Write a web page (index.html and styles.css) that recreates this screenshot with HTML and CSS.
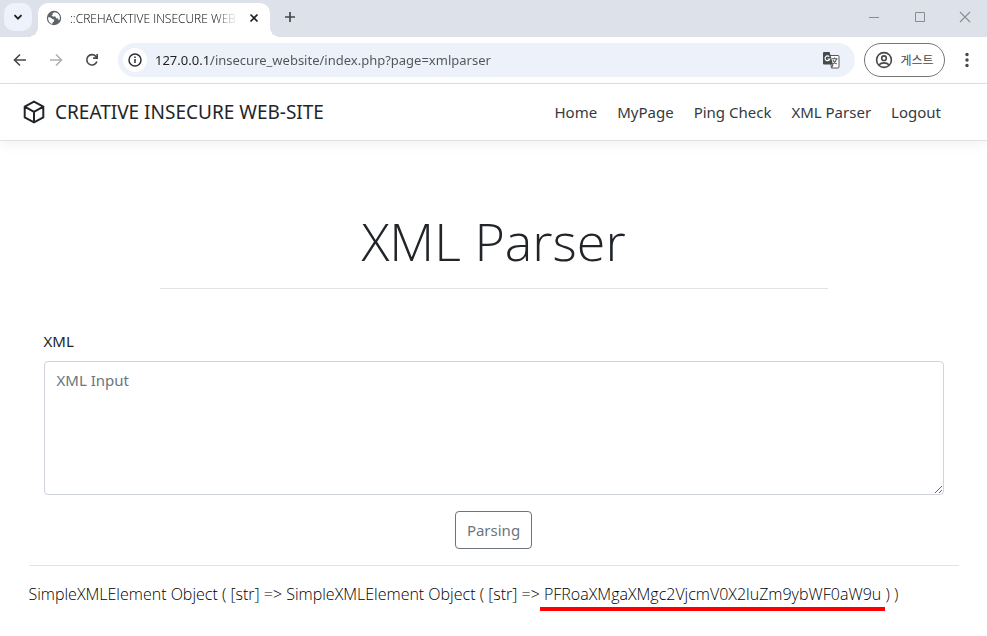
FILE: index.html
```html
<!DOCTYPE html>
<html lang="ko">
<head>
    <meta charset="UTF-8">
    <meta name="viewport" content="width=device-width, initial-scale=1.0">
    <title>::CREHACKTIVE INSECURE WEB-SITE::</title>
    <link rel="stylesheet" href="styles.css">
</head>
<body>
    <!-- Browser frame -->
    <div class="tab-strip">
        <button class="tab-search" type="button" aria-label="Search tabs">
            <svg width="10" height="10" viewBox="0 0 10 10"><path d="M1.5 3.2 5 6.7 8.5 3.2" fill="none" stroke="#1f1f1f" stroke-width="1.8"/></svg>
        </button>
        <div class="tab">
            <svg class="tab-icon" width="16" height="16" viewBox="0 0 16 16">
                <circle cx="8" cy="8" r="7.2" fill="#5f6368"/>
                <path d="M2 7.2 4.6 7.6 6.6 9.2 8.2 9.4 8 11.4 6.6 12.2 6.4 14C3.6 13.2 2 10.8 2 7.2z" fill="#fff"/>
                <path d="M8.6 2.2 6.6 3.2 6.8 4.6 5.6 5.6 6.8 6.6 9.4 6.6 10.2 8.2 12.2 8.6 12.8 10.4 13.8 9.2C14.6 5.4 12.2 2.4 8.6 2.2z" fill="#fff"/>
            </svg>
            <span class="tab-title">::CREHACKTIVE INSECURE WEB</span>
            <button class="tab-close" type="button" aria-label="Close tab">
                <svg width="10" height="10" viewBox="0 0 10 10"><path d="M1.5 1.5 8.5 8.5M8.5 1.5 1.5 8.5" stroke="#1f1f1f" stroke-width="1.7"/></svg>
            </button>
        </div>
        <button class="new-tab" type="button" aria-label="New tab">
            <svg width="12" height="12" viewBox="0 0 12 12"><path d="M6 1v10M1 6h10" stroke="#474747" stroke-width="1.7"/></svg>
        </button>
        <div class="window-controls">
            <button type="button" aria-label="Minimize"><svg width="12" height="12" viewBox="0 0 12 12"><path d="M1 6.5h10" stroke="#8a8c90"/></svg></button>
            <button type="button" aria-label="Maximize"><svg width="12" height="12" viewBox="0 0 12 12"><path d="M1.5 1.5h9v9h-9z" fill="none" stroke="#8a8c90"/></svg></button>
            <button type="button" aria-label="Close"><svg width="12" height="12" viewBox="0 0 12 12"><path d="M1 1 11 11M11 1 1 11" stroke="#8a8c90" stroke-width="1.1"/></svg></button>
        </div>
    </div>
    <div class="toolbar">
        <button class="tool" type="button" aria-label="Back">
            <svg width="16" height="16" viewBox="0 0 16 16"><path d="M14 8H3M8 2.5 2.5 8 8 13.5" fill="none" stroke="#474747" stroke-width="1.6"/></svg>
        </button>
        <button class="tool" type="button" aria-label="Forward" disabled>
            <svg width="16" height="16" viewBox="0 0 16 16"><path d="M2 8h11M8 2.5 13.5 8 8 13.5" fill="none" stroke="#b0b0b0" stroke-width="1.6"/></svg>
        </button>
        <button class="tool" type="button" aria-label="Reload">
            <svg width="16" height="16" viewBox="0 0 16 16"><path d="M12.9 9.6A5.2 5.2 0 1 1 11.9 4.4L13.6 6.2" fill="none" stroke="#474747" stroke-width="1.6"/><path d="M14 2v4.9H9.1V5.3h3.3V2z" fill="#474747"/></svg>
        </button>
        <div class="address-bar">
            <button class="site-info" type="button" aria-label="Site information">
                <svg width="16" height="16" viewBox="0 0 16 16"><circle cx="8" cy="8" r="6" fill="none" stroke="#303030" stroke-width="1.5"/><path d="M8 7v4M8 4.6v1.5" stroke="#303030" stroke-width="1.5"/></svg>
            </button>
            <input class="url" type="text" value="127.0.0.1/insecure_website/index.php?page=xmlparser" aria-label="Address">
            <button class="translate" type="button" aria-label="Translate">
                <svg width="18" height="18" viewBox="0 0 18 18">
                    <path d="M7.5 4.5H16a1 1 0 0 1 1 1V16a1 1 0 0 1-1 1H9.5z" fill="#fff" stroke="#54575b"/>
                    <path d="M1 2a1 1 0 0 1 1-1h5.6l3.4 12.5H2a1 1 0 0 1-1-1z" fill="#474a4d"/>
                    <path d="M7.3 5.7A2.4 2.4 0 1 0 7.8 8H5.6" fill="none" stroke="#fff" stroke-width="1.2"/>
                    <path d="M9.8 7.8h5.8M12.6 6.5v1.3M14.6 7.8c-.5 2.3-2 4.2-4 5.5M11 9c.7 1.7 2 3.1 3.8 4M9.5 17l1.5-3.5" fill="none" stroke="#54575b" stroke-width="1.1"/>
                </svg>
            </button>
        </div>
        <button class="profile" type="button">
            <svg width="18" height="18" viewBox="0 0 18 18">
                <circle cx="9" cy="9" r="7.4" fill="none" stroke="#474747" stroke-width="1.6"/>
                <circle cx="9" cy="7.2" r="2.3" fill="none" stroke="#474747" stroke-width="1.6"/>
                <path d="M4 13.8c2.6-2.6 7.4-2.6 10 0" fill="none" stroke="#474747" stroke-width="1.6"/>
            </svg>
            <span>게스트</span>
        </button>
        <button class="menu" type="button" aria-label="Menu">
            <svg width="4" height="16" viewBox="0 0 4 16" fill="#474747"><circle cx="2" cy="2.5" r="1.7"/><circle cx="2" cy="8" r="1.7"/><circle cx="2" cy="13.5" r="1.7"/></svg>
        </button>
    </div>

    <!-- Site -->
    <header class="navbar">
        <a class="brand" href="#">
            <svg width="22" height="24" viewBox="0 0 22 24"><path d="M11 1.6 20.3 6.6V17.4L11 22.4 1.7 17.4V6.6zM1.7 6.6 11 11.8 20.3 6.6M11 11.8V22.4" fill="none" stroke="#212529" stroke-width="2" stroke-linejoin="round"/></svg>
            <span>CREATIVE INSECURE WEB-SITE</span>
        </a>
        <nav class="nav">
            <a href="#">Home</a>
            <a href="#">MyPage</a>
            <a href="#">Ping Check</a>
            <a href="#">XML Parser</a>
            <a href="#">Logout</a>
        </nav>
    </header>

    <main class="container">
        <div class="page-header">
            <h1>XML Parser</h1>
            <hr>
        </div>
        <form class="xml-form" onsubmit="return false">
            <label for="xml">XML</label>
            <textarea id="xml" name="xml" placeholder="XML Input"></textarea>
            <button class="btn" type="submit">Parsing</button>
        </form>
        <hr>
        <p class="result">SimpleXMLElement Object ( [str] =&gt; SimpleXMLElement Object ( [str] =&gt; <span class="marked">PFRoaXMgaXMgc2VjcmV0X2luZm9ybWF0aW9u</span> ) )</p>
    </main>
</body>
</html>
```
FILE: styles.css
```css
* {
    box-sizing: border-box;
}
body {
    margin: 0;
    background: #fff;
    color: #212529;
    font-family: "Noto Sans", "Noto Sans CJK KR", sans-serif;
    font-size: 15px;
    line-height: 24px;
}
button {
    display: flex;
    align-items: center;
    justify-content: center;
    padding: 0;
    border: none;
    background: none;
    font-family: inherit;
    cursor: pointer;
}
svg {
    display: block;
    flex: none;
}
hr {
    margin: 0;
    border: none;
    border-top: 1px solid #e3e3e4;
}

/* Browser frame */
.tab-strip {
    display: flex;
    height: 37px;
    padding-left: 4px;
    background: #dde1e9;
}
.tab-search {
    width: 28px;
    height: 28px;
    margin: 3px 6px 0 0;
    border-radius: 10px;
    background: #edf2fc;
}
.tab {
    position: relative;
    display: flex;
    align-items: center;
    width: 232px;
    margin-top: 3px;
    padding: 0 10px 5px 8px;
    border-radius: 10px 10px 0 0;
    background: #fff;
}
/* Flared feet of the active tab */
.tab::before,
.tab::after {
    content: "";
    position: absolute;
    bottom: 0;
    width: 10px;
    height: 10px;
}
.tab::before {
    right: 100%;
    background: radial-gradient(circle at 0 0, transparent 10px, #fff 10px);
}
.tab::after {
    left: 100%;
    background: radial-gradient(circle at 100% 0, transparent 10px, #fff 10px);
}
.tab-title {
    flex: 1;
    min-width: 0;
    margin: 2px 10px 0 8px;
    overflow: hidden;
    white-space: nowrap;
    color: #000;
    font-family: "Open Sans", sans-serif;
    font-size: 12px;
    font-weight: 300;
    line-height: 16px;
    -webkit-mask-image: linear-gradient(to left, transparent, #000 24px);
    mask-image: linear-gradient(to left, transparent, #000 24px);
}
.tab-close {
    width: 12px;
    height: 16px;
}
.new-tab {
    width: 28px;
    height: 28px;
    margin: 3px 0 0 6px;
}
.window-controls {
    display: flex;
    margin-left: auto;
}
.window-controls button {
    width: 46px;
    height: 34px;
}
.window-controls button:last-child {
    width: 44px;
}
.toolbar {
    display: flex;
    align-items: center;
    height: 47px;
    padding: 0 8px 0 2px;
    border-bottom: 1px solid #dedfe1;
    background: #fff;
}
.tool {
    width: 36px;
    height: 32px;
}
.address-bar {
    display: flex;
    flex: 1;
    align-items: center;
    min-width: 0;
    height: 34px;
    margin: 0 9px 0 8px;
    padding: 0 15px 0 5px;
    border-radius: 17px;
    background: #ecf1fa;
}
.site-info {
    width: 24px;
    height: 24px;
    border-radius: 50%;
    background: #fff;
}
/* The host part of the address is darker than the path */
.url {
    flex: 1;
    min-width: 0;
    margin-left: 8px;
    padding: 0;
    border: none;
    outline: none;
    background: linear-gradient(90deg, #1f1f1f 56px, #505357 56px);
    -webkit-background-clip: text;
    background-clip: text;
    color: transparent;
    font-family: inherit;
    font-size: 13px;
    line-height: 20px;
}
.profile {
    gap: 7px;
    width: 81px;
    height: 34px;
    border: 1px solid #747775;
    border-radius: 17px;
    color: #474747;
    font-size: 12px;
}
.menu {
    width: 24px;
    height: 32px;
    margin-left: 10px;
}

/* Site */
.navbar {
    display: flex;
    align-items: center;
    justify-content: space-between;
    height: 57px;
    padding: 0 46px 0 23px;
    border-bottom: 1px solid #dee2e6;
    box-shadow: 0 4px 12px rgba(0, 0, 0, 0.05);
}
.navbar a {
    color: #343a40;
    text-decoration: none;
}
.navbar .brand {
    display: flex;
    align-items: center;
    gap: 10px;
    color: #212529;
    font-size: 19px;
}
.nav {
    display: flex;
    gap: 20px;
}
.container {
    max-width: 960px;
    margin: 0 auto;
    padding: 64px 15px 16px;
}
.page-header {
    max-width: 668px;
    margin: 0 auto;
    text-align: center;
}
h1 {
    margin: 0;
    padding-bottom: 12px;
    font-family: "Open Sans", sans-serif;
    font-size: 52px;
    font-weight: 300;
    line-height: 71px;
}
.xml-form {
    display: flex;
    flex-direction: column;
    padding: 40px 15px 16px;
}
.xml-form label {
    align-self: flex-start;
    margin-bottom: 8px;
}
.xml-form textarea {
    height: 134px;
    padding: 6px 12px;
    border: 1px solid #ced4da;
    border-radius: 4px;
    background: #fff;
    color: #495057;
    font-family: inherit;
    font-size: 15px;
    line-height: 24px;
    resize: vertical;
}
.xml-form textarea::placeholder {
    color: #6c757d;
}
.btn {
    align-self: center;
    height: 38px;
    margin-top: 16px;
    padding: 0 11px;
    border: 1px solid #6c757d;
    border-radius: 4px;
    color: #6c757d;
    font-size: 15px;
}
.result {
    margin: 16px 0 0;
    color: #000;
    font-family: "Open Sans", sans-serif;
    font-size: 16px;
    font-weight: 300;
}
.marked {
    padding: 0 4px 2px;
    margin: 0 -4px;
    border-bottom: 4px solid #f00;
}
```
